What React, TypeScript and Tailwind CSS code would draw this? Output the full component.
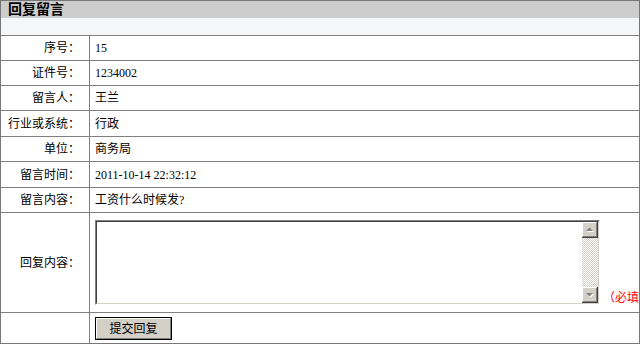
import React from "react";

const FONT = { fontFamily: '"Liberation Serif", "Noto Sans CJK SC", serif' };

const rows: { label: string; value: string; h: string }[] = [
  { label: "序号：", value: "15", h: "h-[25px]" },
  { label: "证件号：", value: "1234002", h: "h-[25px]" },
  { label: "留言人：", value: "王兰", h: "h-[25px]" },
  { label: "行业或系统：", value: "行政", h: "h-[26px]" },
  { label: "单位：", value: "商务局", h: "h-[25px]" },
  { label: "留言时间：", value: "2011-10-14 22:32:12", h: "h-[26px]" },
  { label: "留言内容：", value: "工资什么时候发?", h: "h-[25px]" },
];

function Label({ children }: { children?: React.ReactNode }) {
  return (
    <div className="flex w-[89px] shrink-0 items-center justify-end border-r border-[#808080] pr-[9px]">
      {children}
    </div>
  );
}

function Arrow({ up }: { up?: boolean }) {
  return (
    <svg width="9" height="6" viewBox="0 0 9 6" className="block">
      {up ? (
        <>
          <path d="M2 5h7L5.5 1.5z" fill="#ffffff" />
          <path d="M1 4h7L4.5 0.5z" fill="#808080" />
        </>
      ) : (
        <>
          <path d="M2 2h7L5.5 5.5z" fill="#ffffff" />
          <path d="M1 1h7L4.5 4.5z" fill="#808080" />
        </>
      )}
    </svg>
  );
}

function ScrollButton({ up }: { up?: boolean }) {
  return (
    <div className="h-[16px] w-[16px] border-b border-r border-[#404040] bg-[#d4d0c8]">
      <div className="flex h-full w-full items-center justify-center border-l border-t border-b border-r border-l-white border-t-white border-b-[#808080] border-r-[#808080]">
        <Arrow up={up} />
      </div>
    </div>
  );
}

function TextArea() {
  return (
    <div className="h-[85px] w-[505px] shrink-0 border border-l-[#808080] border-t-[#808080] border-b-white border-r-white">
      <div className="flex h-full w-full border border-l-[#404040] border-t-[#404040] border-b-[#d4d0c8] border-r-[#d4d0c8] bg-white">
        <textarea className="h-full flex-1 resize-none bg-white outline-none" />
        <div className="flex w-[16px] flex-col">
          <ScrollButton up />
          <div className="flex-1 bg-[repeating-conic-gradient(#d4d0c8_0_25%,#ffffff_0_50%)] bg-[length:2px_2px]" />
          <ScrollButton />
        </div>
      </div>
    </div>
  );
}

export default function App() {
  return (
    <div className="h-[344px] w-[640px] overflow-hidden bg-white text-[12px] text-black" style={FONT}>
      <div className="flex h-full w-full flex-col border border-[#777777]">
        <div className="flex h-[17px] items-center bg-[#cccccc] pl-[7px] text-[14px] font-bold leading-none">
          回复留言
        </div>
        <div className="h-[18px] border-b border-[#808080] bg-[#f5f6f8]" />
        {rows.map((r) => (
          <div key={r.label} className={`flex ${r.h} border-b border-[#808080]`}>
            <Label>{r.label}</Label>
            <div className="flex flex-1 items-center pl-[5px]">{r.value}</div>
          </div>
        ))}
        <div className="flex h-[100px] border-b border-[#808080]">
          <Label>回复内容：</Label>
          <div className="flex flex-1 items-center overflow-hidden pl-[5px]">
            <div className="flex items-end">
              <TextArea />
              <span className="ml-[3px] whitespace-nowrap leading-[14px] text-[#ff0000]">（必填）</span>
            </div>
          </div>
        </div>
        <div className="flex flex-1">
          <Label />
          <div className="flex-1 pl-[5px] pt-[4px]">
            <button className="h-[23px] w-[77px] border border-black bg-[#d4d0c8] p-0">
              <div className="flex h-full w-full items-center justify-center border border-l-white border-t-white border-b-[#808080] border-r-[#808080] text-[12px] leading-none">
                提交回复
              </div>
            </button>
          </div>
        </div>
      </div>
    </div>
  );
}
